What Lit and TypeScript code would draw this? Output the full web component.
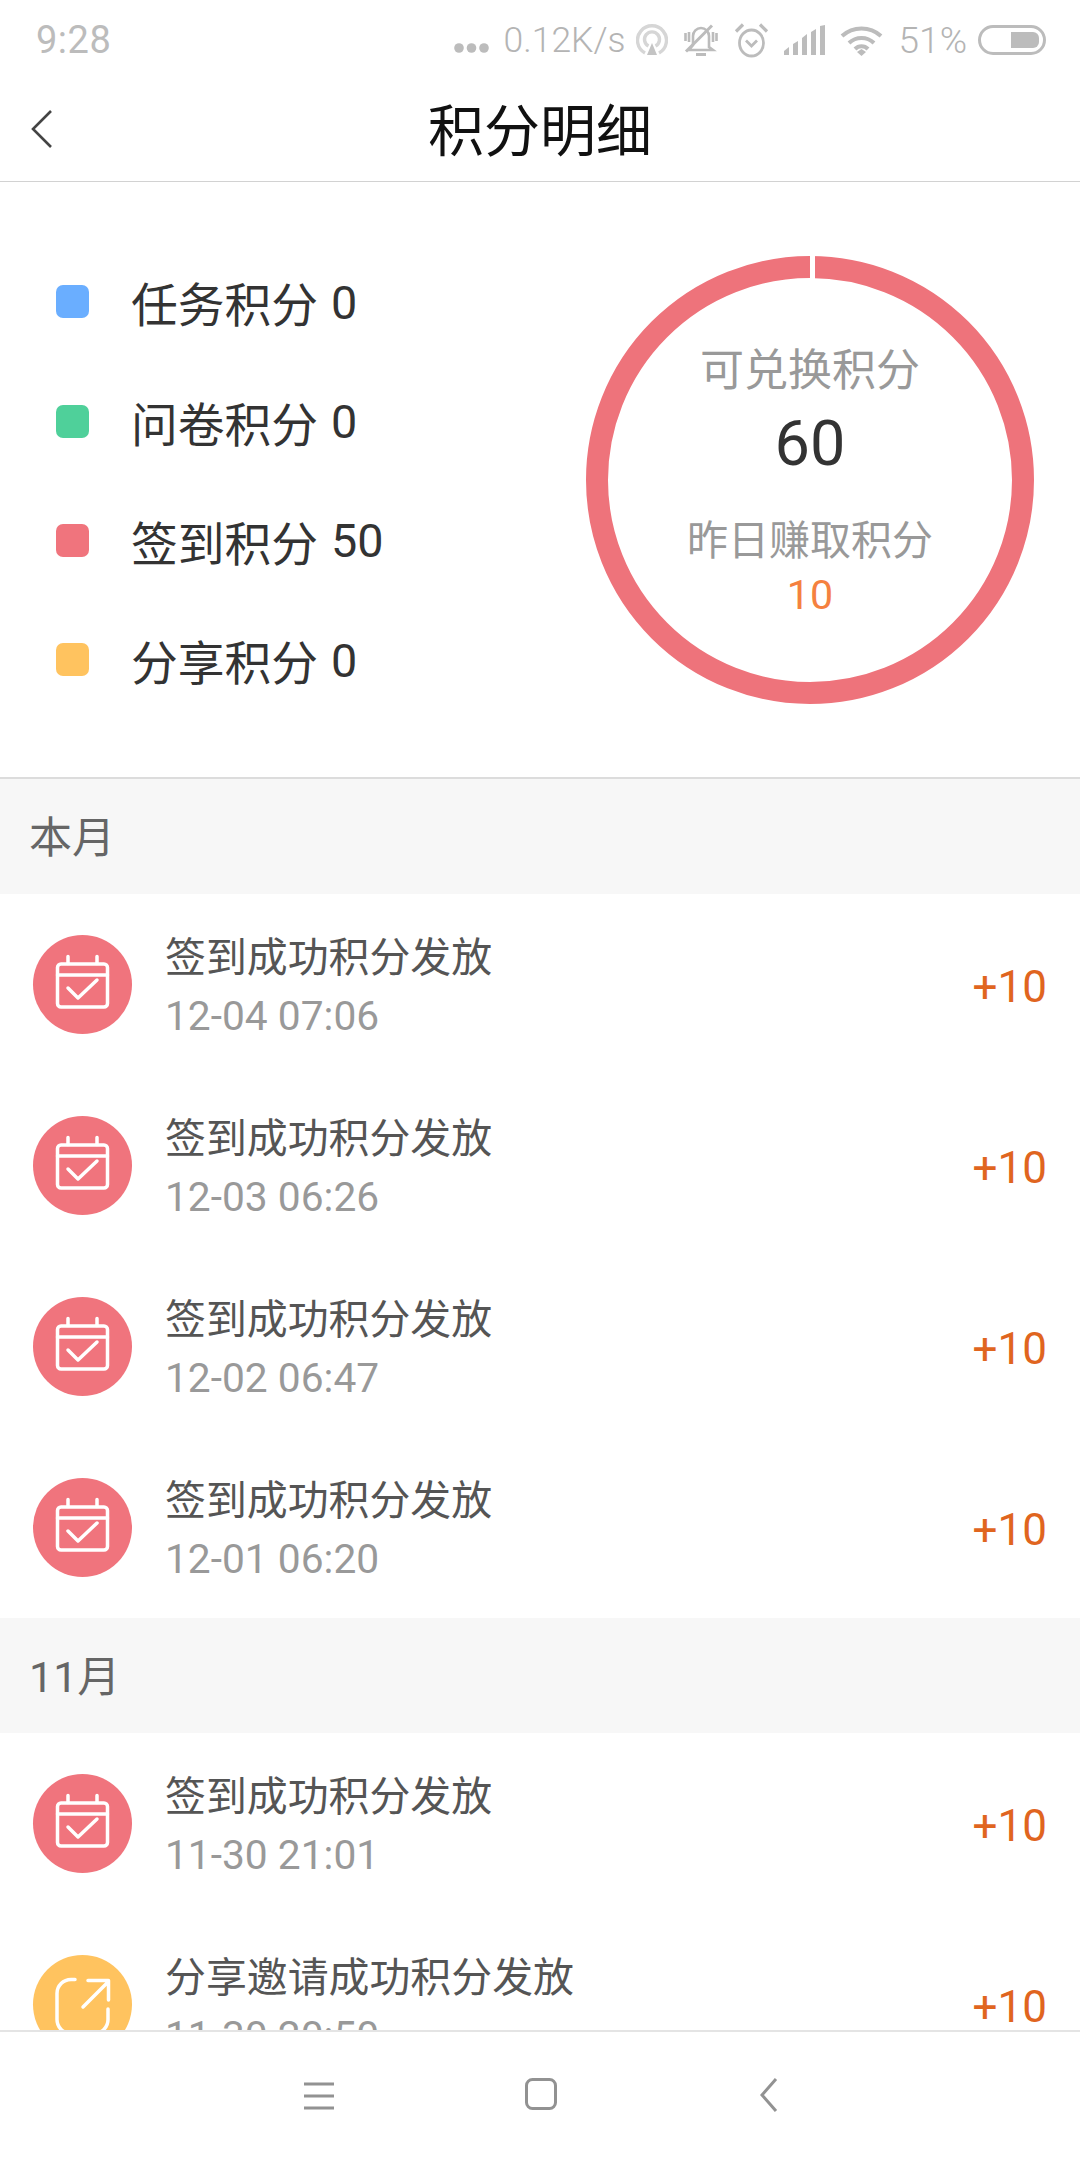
import { LitElement, html, css, svg } from "lit";
import { customElement } from "lit/decorators.js";

const legend = [
  { name: "任务积分", value: "0", tone: "blue" },
  { name: "问卷积分", value: "0", tone: "green" },
  { name: "签到积分", value: "50", tone: "pink" },
  { name: "分享积分", value: "0", tone: "yellow" },
];

type Row = { title: string; time: string; kind: "cal" | "share" };
const sections: { label: string; rows: Row[] }[] = [
  {
    label: "本月",
    rows: [
      { title: "签到成功积分发放", time: "12-04 07:06", kind: "cal" },
      { title: "签到成功积分发放", time: "12-03 06:26", kind: "cal" },
      { title: "签到成功积分发放", time: "12-02 06:47", kind: "cal" },
      { title: "签到成功积分发放", time: "12-01 06:20", kind: "cal" },
    ],
  },
  {
    label: "11月",
    rows: [
      { title: "签到成功积分发放", time: "11-30 21:01", kind: "cal" },
      { title: "分享邀请成功积分发放", time: "11-30 20:50", kind: "share" },
    ],
  },
];

const calIcon = svg`<rect x="24.5" y="29" width="50" height="43" rx="3.5" /><path d="M24.5 40h50M35 21.5v7M64 21.5v7" /><path d="M35 53l10 10 19-18" />`;
const shareIcon = svg`<path d="M42 24.5h-4a14 14 0 0 0-14 14v26a14 14 0 0 0 14 14h23a14 14 0 0 0 14-14V54" /><path d="M50 52l25-25M55 25.5h20.5V45" />`;

@customElement("app-root")
export class AppRoot extends LitElement {
  static styles = css`
    :host {
      display: block;
      width: 1080px;
      height: 2160px;
      background: #fff;
      font-family: Roboto, "Noto Sans CJK SC", sans-serif;
      overflow: hidden;
    }
    .page { display: flex; flex-direction: column; height: 2160px; }

    .status {
      height: 72px; flex: none; display: flex; align-items: center;
      padding: 8px 34px 0 36px; box-sizing: border-box; color: #bcbcbc;
    }
    .time { flex: 1; font-size: 38px; letter-spacing: 0.5px; }
    .sicons { display: flex; align-items: center; font-size: 35.5px; font-weight: 300; color: #b4b4b4; }
    .sicons svg { display: block; flex: none; }
    .speed { margin-left: 15px; }
    .i-radio { margin-left: 10px; }
    .i-bell, .i-alarm { margin-left: 16px; }
    .i-signal, .i-wifi { margin-left: 15px; }
    .i-dots { margin-top: 15px; }
    .pct { margin-left: 16px; font-size: 37px; }
    .i-batt { margin-left: 11px; }

    .header {
      height: 110px; flex: none; display: flex; align-items: center; justify-content: center;
      border-bottom: 1px solid #d2d2d2; position: relative; box-sizing: border-box; padding-top: 11px;
    }
    .back { position: absolute; left: 31px; top: 37px; }
    .title { font-size: 56px; color: #111; line-height: 60px; }

    .summary {
      height: 597px; flex: none; display: flex; box-sizing: border-box;
      border-bottom: 2px solid #dcdcdc; padding: 74px 46px 0 56px; justify-content: space-between;
    }
    .legend { display: flex; flex-direction: column; gap: 60px; padding-top: 16px; }
    .legend-item { display: flex; align-items: center; height: 59.4px; color: #333; font-size: 46.75px; }
    .swatch { width: 33px; height: 33px; border-radius: 7px; margin-right: 42px; flex: none; }
    .blue { background: #6aaeff; }
    .green { background: #4fd09a; }
    .pink { background: #f0747d; }
    .yellow { background: #ffc35f; }
    .legend-val { margin-left: 13px; padding-top: 2px; }

    .ring { width: 448px; height: 448px; display: grid; }
    .ring > * { grid-area: 1 / 1; }
    .ring-text { display: flex; flex-direction: column; align-items: center; text-align: center; padding-top: 87px; }
    .ring-label { color: #999; font-size: 44px; line-height: 56px; }
    .ring-num { color: #333; font-size: 63px; line-height: 76px; margin: 7px 0 33px; }
    .ring-label.small { font-size: 41px; line-height: 52px; }
    .ring-sub { color: #f5813f; font-size: 41.25px; line-height: 48px; margin-top: 4px; }

    .list { flex: 1; min-height: 0; overflow: hidden; }
    .section {
      height: 115px; background: #f7f7f7; display: flex; align-items: center; padding: 0 0 5px 29px;
      box-sizing: border-box; color: #666; font-size: 43px;
    }
    .row { height: 181px; display: flex; align-items: center; padding: 0 33px; box-sizing: border-box; }
    .avatar { width: 99px; height: 99px; border-radius: 50%; flex: none; margin-right: 33px; }
    .avatar.share { background: #ffc35f; }
    .avatar.cal { background: #f0747d; }
    .avatar svg { display: block; fill: none; stroke: #fff; stroke-width: 3.5; stroke-linecap: round; stroke-linejoin: round; }
    .body { flex: 1; display: flex; flex-direction: column; padding-top: 4px; }
    .row-title { color: #555; font-size: 40.9px; line-height: 58px; }
    .row-time { color: #999; font-size: 40.7px; line-height: 58px; }
    .amount { color: #e0651f; font-size: 44px; padding-top: 4px; }

    .nav {
      height: 130px; flex: none; border-top: 2px solid #e4e4e4; box-sizing: border-box; background: #fff;
      display: flex; align-items: flex-start; padding: 46px 0 0 303px;
    }
    .nav svg { display: block; fill: none; stroke: #929292; stroke-width: 3; flex: none; }
    .n-menu { margin: 4px 190px 0 0; }
    .n-home { margin-right: 201px; }
  `;

  private statusIcons() {
    return html`
      <svg class="i-dots" width="35" height="10" viewBox="0 0 35 10" fill="#bcbcbc"><circle cx="5" cy="5" r="4.8"/><circle cx="17.5" cy="5" r="4.8"/><circle cx="30" cy="5" r="4.8"/></svg>
      <span class="speed">0.12K/s</span>
      <svg class="i-radio" width="32" height="32" viewBox="0 0 32 32" fill="none" stroke="#d6d6d6" stroke-width="3.4"><path d="M9 29a14.500 14.500 0 1 1 14 0"/><path d="M12.500 22a7.500 7.500 0 1 1 7 0"/><path d="M16 19l5 12H11z" fill="#c4c4c4" stroke="none"/></svg>
      <svg class="i-bell" width="34" height="32" viewBox="0 0 34 32" fill="none" stroke="#bcbcbc" stroke-width="2.6"><path d="M9 21V12a8 8 0 0 1 16 0v11l4 3H5z"/><path d="M1.500 9v8M5 8v10M32.500 9v8M29 8v10"/><path d="M2 27.500L28 1.500" stroke-width="3"/><path d="M12 30.500h10" stroke-width="3"/></svg>
      <svg class="i-alarm" width="35" height="36" viewBox="0 0 35 36" fill="none" stroke="#bcbcbc" stroke-width="2.800"><ellipse cx="17.500" cy="21" rx="12" ry="13"/><path d="M12 18.500l5.500 5.500 5.500-5.500"/><path d="M2 9.500L9 2.500M33 9.500L26 2.500" stroke-width="3.200"/></svg>
      <svg class="i-signal" width="41" height="30" viewBox="0 0 41 30" fill="#bcbcbc"><path d="M0 30v-4l5-4v8zM9 30V19l5-3v14zM18 30V13l5-4v21zM27 30V7l5-3v26zM36 30V1l5-1v30z"/></svg>
      <svg class="i-wifi" width="43" height="31" viewBox="0 0 43 31" fill="none" stroke="#bcbcbc" stroke-width="4"><path d="M2 11a29 29 0 0 1 39 0M9 18a18 18 0 0 1 25 0M15 24a9 9 0 0 1 13 0"/><path d="M21.500 31l-4.500-4 4.500-3 4.500 3z" fill="#bcbcbc" stroke="none"/></svg>
      <span class="pct">51%</span>
      <svg class="i-batt" width="68" height="30" viewBox="0 0 68 30" fill="none"><rect x="1.500" y="1.500" width="65" height="27" rx="13.500" stroke="#bcbcbc" stroke-width="3"/><path d="M33 7h22a6 6 0 0 1 6 6v4a6 6 0 0 1-6 6H33z" fill="#bcbcbc"/></svg>
    `;
  }

  render() {
    return html`<div class="page">
      <div class="status">
        <span class="time">9:28</span>
        <div class="sicons">${this.statusIcons()}</div>
      </div>
      <div class="header">
        <svg class="back" width="24" height="40" viewBox="0 0 24 40" fill="none" stroke="#444" stroke-width="2.600"><path d="M20 2L2 20l18 18"/></svg>
        <span class="title">积分明细</span>
      </div>
      <div class="summary">
        <div class="legend">
          ${legend.map(
            (l) => html`<div class="legend-item">
              <span class="swatch ${l.tone}"></span>
              <span>${l.name}</span><span class="legend-val">${l.value}</span>
            </div>`
          )}
        </div>
        <div class="ring">
          <svg width="448" height="448" viewBox="0 0 448 448">
            <circle cx="224" cy="224" r="213" fill="none" stroke="#ee737b" stroke-width="22" />
            <rect x="224" y="0" width="5" height="24" fill="#fff" />
          </svg>
          <div class="ring-text">
            <div class="ring-label">可兑换积分</div>
            <div class="ring-num">60</div>
            <div class="ring-label small">昨日赚取积分</div>
            <div class="ring-sub">10</div>
          </div>
        </div>
      </div>
      <div class="list">
        ${sections.map(
          (s) => html`<div class="section">${s.label}</div>
            ${s.rows.map(
              (r) => html`<div class="row">
                <div class="avatar ${r.kind}">
                  <svg width="99" height="99" viewBox="0 0 99 99">${r.kind === "cal" ? calIcon : shareIcon}</svg>
                </div>
                <div class="body">
                  <div class="row-title">${r.title}</div>
                  <div class="row-time">${r.time}</div>
                </div>
                <div class="amount">+10</div>
              </div>`
            )}`
        )}
      </div>
      <div class="nav">
        <svg class="n-menu" width="32" height="28" viewBox="0 0 32 28"><path d="M1 2h30M1 14h30M1 26h30"/></svg>
        <svg class="n-home" width="32" height="32" viewBox="0 0 32 32"><rect x="1.500" y="1.500" width="29" height="29" rx="6"/></svg>
        <svg class="n-back" width="22" height="34" viewBox="0 0 22 34"><path d="M18 1L4 17l14 16"/></svg>
      </div>
    </div>`;
  }
}
